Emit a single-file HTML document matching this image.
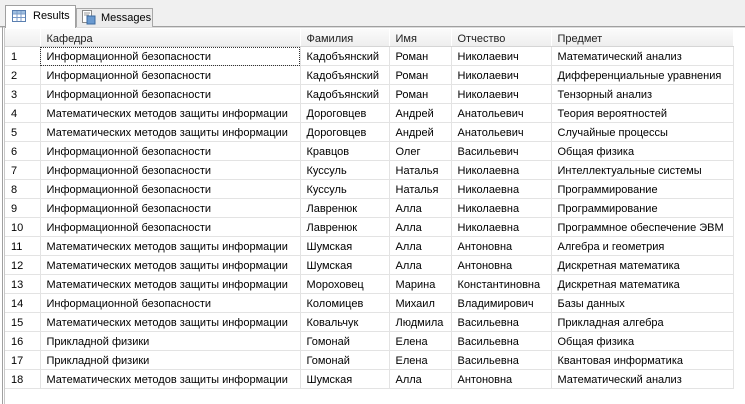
<!DOCTYPE html><html><head><meta charset="utf-8"><style>
body{margin:0;width:745px;height:404px;background:#fff;position:relative;overflow:hidden;font-family:"Liberation Sans","DejaVu Sans",sans-serif;font-size:11px;color:#000}
.a{position:absolute}
table{position:absolute;left:5px;top:29px;border-collapse:collapse;table-layout:fixed}
td{height:16px;padding:2px 0 0 6px;border-right:1px solid #e3e3e3;border-bottom:1px solid #e3e3e3;white-space:nowrap;overflow:hidden}
tr.h td{height:15px;background:linear-gradient(#fbfbfb,#eeeeee);border-right:1px solid #fff;border-bottom:1px solid #d5d5d5;color:#222}
td.n{background:#fff;padding-left:6px}
</style></head><body>
<div class="a" style="left:0;top:0;width:745px;height:28px;background:#f0f0f0"></div>
<div class="a" style="left:0;top:26px;width:745px;height:1px;background:#a0a0a0"></div>
<div class="a" style="left:0;top:27px;width:745px;height:1px;background:#dcdcdc"></div>
<div class="a" style="left:2px;top:27px;width:1px;height:377px;background:#a0a0a0"></div>
<div class="a" style="left:4px;top:27px;width:1px;height:377px;background:#c8c8c8"></div>
<div class="a" style="left:5px;top:5px;width:69px;height:22px;background:#fff;border:1px solid #a0a0a0;border-bottom:none"></div>
<svg class="a" style="left:12px;top:10px" width="14" height="12"><rect x="0.5" y="0.5" width="13" height="11" fill="#fff" stroke="#5a7fb0"/><rect x="1" y="1" width="12" height="3" fill="#9fbfe0"/><path d="M5 1v10M9 1v10M1 4h12M1 7.5h12" stroke="#7c9cc8" fill="none"/></svg>
<div class="a" style="left:33px;top:10px">Results</div>
<div class="a" style="left:76px;top:8px;width:75px;height:18px;background:#ececec;border:1px solid #a8a8a8;border-bottom:none"></div>
<svg class="a" style="left:82px;top:10px" width="14" height="15"><rect x="0.5" y="0.5" width="9" height="12" fill="#fff" stroke="#8a8a8a"/><rect x="5" y="6" width="8" height="8" fill="#6a9ad0" stroke="#3b6aa0"/><path d="M2 3h6M2 5h5" stroke="#999"/></svg>
<div class="a" style="left:101px;top:12px">Messages</div>
<table>
<colgroup><col style="width:35px"><col style="width:260px"><col style="width:89px"><col style="width:62px"><col style="width:100px"><col style="width:182px"></colgroup>
<tr class="h"><td></td><td>Кафедра</td><td>Фамилия</td><td>Имя</td><td>Отчество</td><td>Предмет</td></tr>
<tr><td class="n">1</td><td style="outline:1px dotted #333;outline-offset:-1px">Информационной безопасности</td><td>Кадобъянский</td><td>Роман</td><td>Николаевич</td><td>Математический анализ</td></tr>
<tr><td class="n">2</td><td>Информационной безопасности</td><td>Кадобъянский</td><td>Роман</td><td>Николаевич</td><td>Дифференциальные уравнения</td></tr>
<tr><td class="n">3</td><td>Информационной безопасности</td><td>Кадобъянский</td><td>Роман</td><td>Николаевич</td><td>Тензорный анализ</td></tr>
<tr><td class="n">4</td><td>Математических методов защиты информации</td><td>Дороговцев</td><td>Андрей</td><td>Анатольевич</td><td>Теория вероятностей</td></tr>
<tr><td class="n">5</td><td>Математических методов защиты информации</td><td>Дороговцев</td><td>Андрей</td><td>Анатольевич</td><td>Случайные процессы</td></tr>
<tr><td class="n">6</td><td>Информационной безопасности</td><td>Кравцов</td><td>Олег</td><td>Васильевич</td><td>Общая физика</td></tr>
<tr><td class="n">7</td><td>Информационной безопасности</td><td>Куссуль</td><td>Наталья</td><td>Николаевна</td><td>Интеллектуальные системы</td></tr>
<tr><td class="n">8</td><td>Информационной безопасности</td><td>Куссуль</td><td>Наталья</td><td>Николаевна</td><td>Программирование</td></tr>
<tr><td class="n">9</td><td>Информационной безопасности</td><td>Лавренюк</td><td>Алла</td><td>Николаевна</td><td>Программирование</td></tr>
<tr><td class="n">10</td><td>Информационной безопасности</td><td>Лавренюк</td><td>Алла</td><td>Николаевна</td><td>Программное обеспечение ЭВМ</td></tr>
<tr><td class="n">11</td><td>Математических методов защиты информации</td><td>Шумская</td><td>Алла</td><td>Антоновна</td><td>Алгебра и геометрия</td></tr>
<tr><td class="n">12</td><td>Математических методов защиты информации</td><td>Шумская</td><td>Алла</td><td>Антоновна</td><td>Дискретная математика</td></tr>
<tr><td class="n">13</td><td>Математических методов защиты информации</td><td>Мороховец</td><td>Марина</td><td>Константиновна</td><td>Дискретная математика</td></tr>
<tr><td class="n">14</td><td>Информационной безопасности</td><td>Коломицев</td><td>Михаил</td><td>Владимирович</td><td>Базы данных</td></tr>
<tr><td class="n">15</td><td>Математических методов защиты информации</td><td>Ковальчук</td><td>Людмила</td><td>Васильевна</td><td>Прикладная алгебра</td></tr>
<tr><td class="n">16</td><td>Прикладной физики</td><td>Гомонай</td><td>Елена</td><td>Васильевна</td><td>Общая физика</td></tr>
<tr><td class="n">17</td><td>Прикладной физики</td><td>Гомонай</td><td>Елена</td><td>Васильевна</td><td>Квантовая информатика</td></tr>
<tr><td class="n">18</td><td>Математических методов защиты информации</td><td>Шумская</td><td>Алла</td><td>Антоновна</td><td>Математический анализ</td></tr>
</table>
</body></html>
